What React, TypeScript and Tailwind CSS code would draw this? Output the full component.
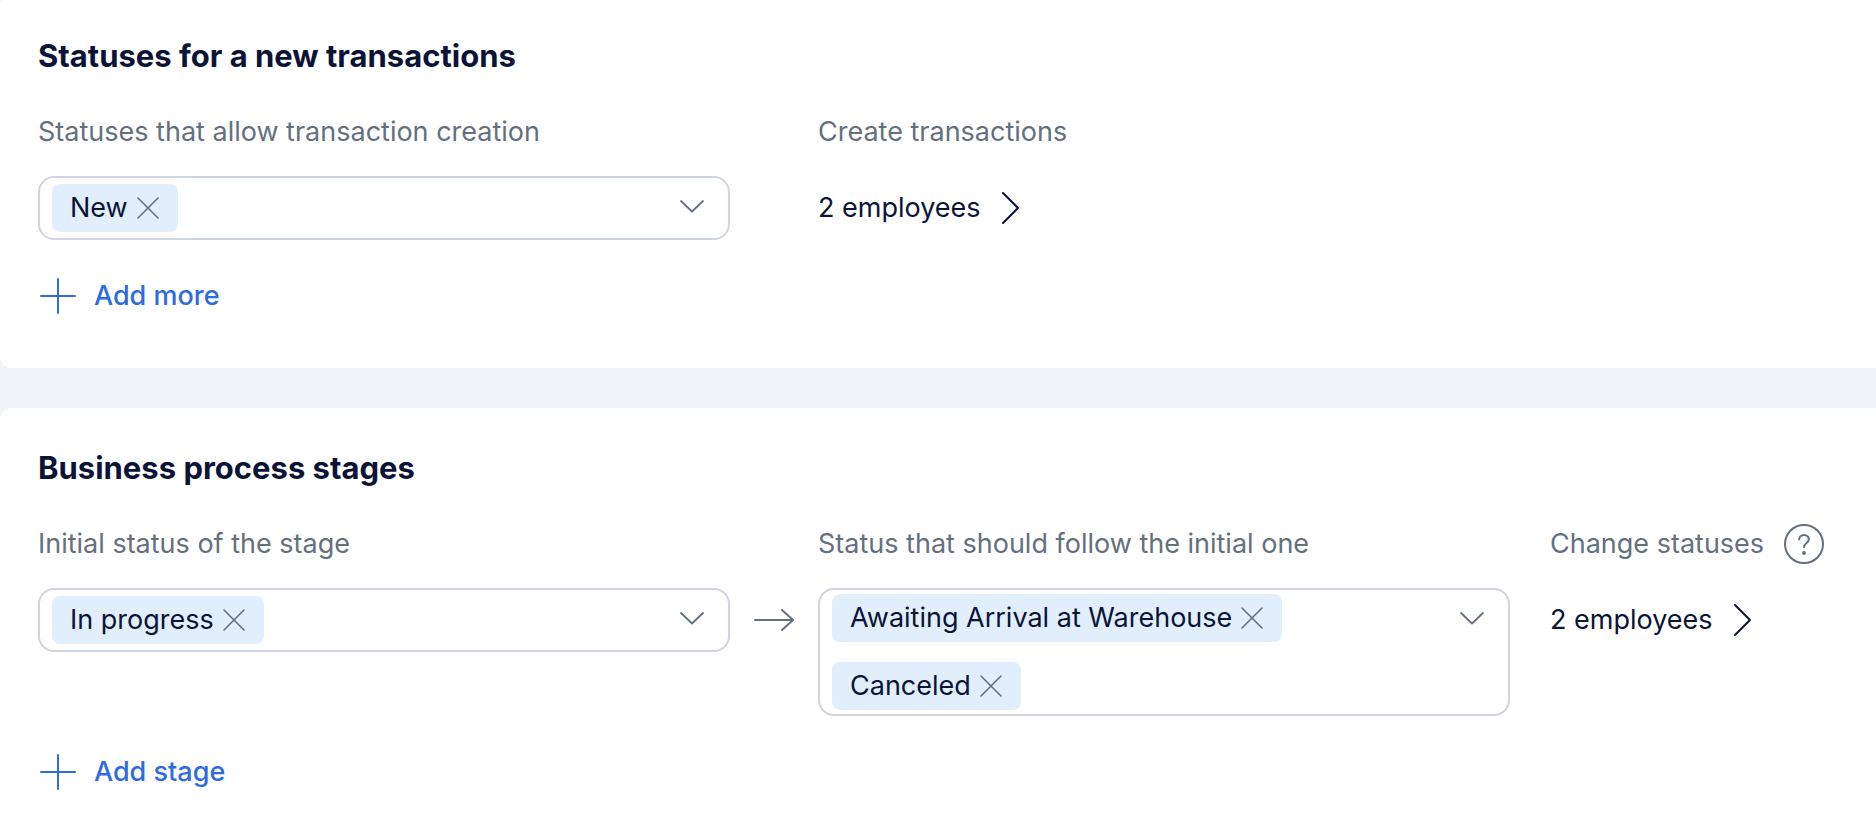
import { useId, useState, type ReactNode } from "react";

const GRID = "grid grid-cols-[minmax(0,1fr)_88px_minmax(0,1fr)_328px] items-start gap-y-7";

function CrossIcon() {
  return (
    <svg width="24" height="24" viewBox="0 0 24 24" fill="none" stroke="currentColor" strokeWidth="1.6" strokeLinecap="round">
      <path d="M2 2l20 20M22 2L2 22" />
    </svg>
  );
}

function ChevronDownIcon() {
  return (
    <svg width="28" height="16" viewBox="0 0 28 16" fill="none" stroke="currentColor" strokeWidth="1.8" strokeLinecap="round" strokeLinejoin="round">
      <path d="M3 3l11 10.500L25 3" />
    </svg>
  );
}

function ChevronRightIcon() {
  return (
    <svg width="20" height="36" viewBox="0 0 20 36" fill="none" stroke="currentColor" strokeWidth="2" strokeLinecap="round" strokeLinejoin="round">
      <path d="M2 3l15 15L2 33" />
    </svg>
  );
}

function ArrowIcon() {
  return (
    <svg width="40" height="24" viewBox="0 0 40 24" fill="none" stroke="currentColor" strokeWidth="2" strokeLinecap="round" strokeLinejoin="round">
      <path d="M1 12h38M28 2l11 10-11 10" />
    </svg>
  );
}

function PlusIcon() {
  return (
    <svg width="40" height="40" viewBox="0 0 40 40" fill="none" stroke="currentColor" strokeWidth="2" strokeLinecap="round">
      <path d="M20 3v34M3 20h34" />
    </svg>
  );
}

function HelpIcon() {
  return (
    <svg width="40" height="40" viewBox="0 0 40 40" fill="none" stroke="currentColor" strokeWidth="2" strokeLinecap="round" strokeLinejoin="round">
      <circle cx="20" cy="20" r="19" />
      <path d="M15.200 15.500c0-2.600 2.100-4.500 4.800-4.500s4.800 1.900 4.800 4.400c0 3.800-4.800 3.400-4.800 7.800" />
      <circle cx="20" cy="29" r="1.900" fill="currentColor" stroke="none" />
    </svg>
  );
}

function Card({ title, className, children }: { title: string; className: string; children: ReactNode }) {
  return (
    <section className={`bg-white px-[38px] ${className}`}>
      <h2 className="mb-10 text-[31px] leading-10 font-bold">{title}</h2>
      {children}
    </section>
  );
}

function Label({ id, children }: { id?: string; children: ReactNode }) {
  return (
    <span id={id} className="whitespace-nowrap text-[#64707d]">
      {children}
    </span>
  );
}

function TagSelect({ labelId, initial }: { labelId: string; initial: string[] }) {
  const [tags, setTags] = useState(initial);

  return (
    <div role="group" aria-labelledby={labelId} className="flex min-h-16 items-start rounded-2xl border-2 border-[#d0d4e0] pr-[22px] pl-3">
      <div className="flex min-h-[60px] flex-1 flex-col items-start justify-center gap-5 py-1">
        {tags.map((tag) => (
          <span key={tag} className="flex h-12 items-center gap-2 rounded-lg bg-[#e1effd] px-[18px]">
            {tag}
            <button
              type="button"
              aria-label={`Remove ${tag}`}
              className="text-[#64707d]"
              onClick={() => setTags(tags.filter((t) => t !== tag))}
            >
              <CrossIcon />
            </button>
          </span>
        ))}
      </div>
      <button type="button" aria-label="Open list" className="flex h-14 items-center text-[#64707d]">
        <ChevronDownIcon />
      </button>
    </div>
  );
}

function EmployeesButton() {
  return (
    <button type="button" className="flex h-16 items-center gap-5 whitespace-nowrap">
      2 employees
      <ChevronRightIcon />
    </button>
  );
}

function AddButton({ children }: { children: ReactNode }) {
  return (
    <button type="button" className="mt-9 flex h-10 items-center gap-4 font-medium text-[#2f6be0]">
      <PlusIcon />
      {children}
    </button>
  );
}

export default function App() {
  const id = useId();

  return (
    <main className="flex min-h-screen flex-col gap-10 bg-[#f2f3f9] font-['Inter',sans-serif] text-[27px] leading-8 text-[#0b1437]">
      <Card title="Statuses for a new transactions" className="rounded-tl rounded-bl-xl pt-9 pb-[52px]">
        <div className={GRID}>
          <Label id={`${id}-create`}>Statuses that allow transaction creation</Label>
          <div />
          <Label>Create transactions</Label>
          <div />
          <TagSelect labelId={`${id}-create`} initial={["New"]} />
          <div />
          <EmployeesButton />
        </div>
        <AddButton>Add more</AddButton>
      </Card>

      <Card title="Business process stages" className="flex-1 rounded-tl-xl pt-10 pb-9">
        <div className={GRID}>
          <Label id={`${id}-from`}>Initial status of the stage</Label>
          <div />
          <Label id={`${id}-to`}>Status that should follow the initial one</Label>
          <div className="flex h-8 items-center gap-5 pl-10">
            <Label>Change statuses</Label>
            <button type="button" aria-label="Help" className="text-[#64707d]">
              <HelpIcon />
            </button>
          </div>
          <TagSelect labelId={`${id}-from`} initial={["In progress"]} />
          <div className="flex h-16 items-center justify-center text-[#64707d]">
            <ArrowIcon />
          </div>
          <TagSelect labelId={`${id}-to`} initial={["Awaiting Arrival at Warehouse", "Canceled"]} />
          <div className="pl-10">
            <EmployeesButton />
          </div>
        </div>
        <AddButton>Add stage</AddButton>
      </Card>
    </main>
  );
}
